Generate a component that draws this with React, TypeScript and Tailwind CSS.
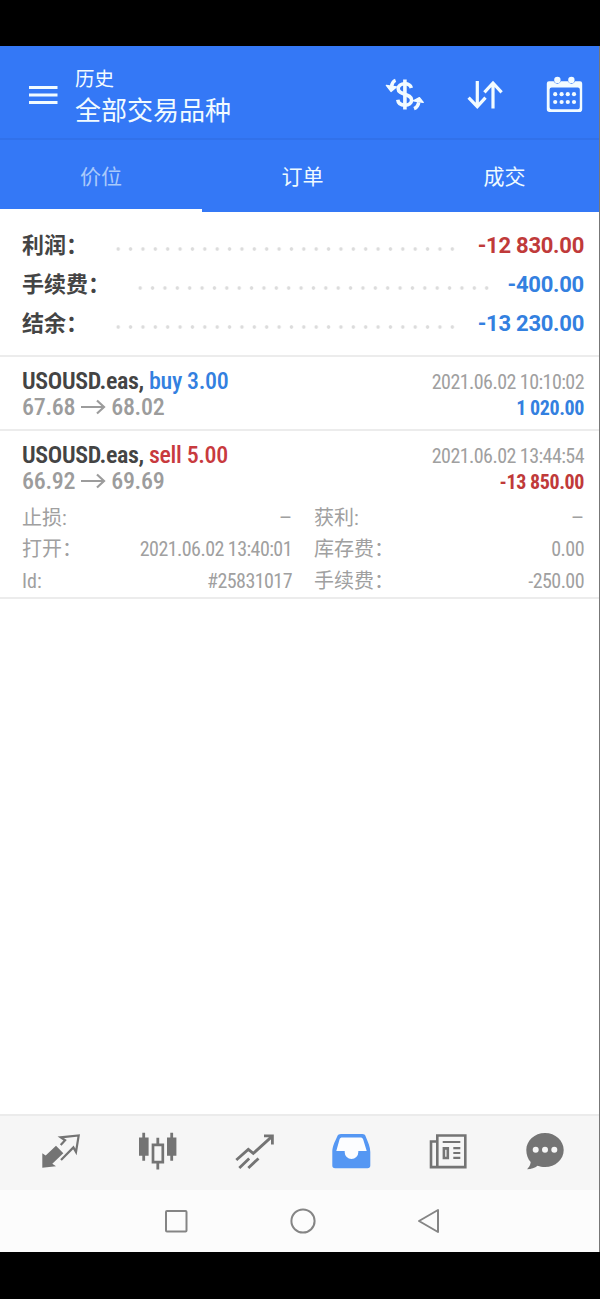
import type { ReactNode } from "react";

const summary = [
  { label: "利润：", value: "-12 830.00", color: "text-[#c03a3a]", dots: "w-[347px]" },
  { label: "手续费：", value: "-400.00", color: "text-[#3380e0]", dots: "w-[359px]" },
  { label: "结余：", value: "-13 230.00", color: "text-[#3380e0]", dots: "w-[347px]" },
];

const details = [
  { label: "止损:", value: "–", label2: "获利:", value2: "–" },
  { label: "打开：", value: "2021.06.02 13:40:01", label2: "库存费：", value2: "0.00" },
  { label: "Id:", value: "#25831017", label2: "手续费：", value2: "-250.00" },
];

const MenuIcon = () => (
  <svg width="30" height="20" viewBox="0 0 30 20" stroke="currentColor" strokeWidth="3">
    <path d="M1 2.4h28.5M1 9.9h28.5M1 17.6h28.5" />
  </svg>
);

const CurrencyIcon = () => (
  <svg width="40" height="34" viewBox="0 0 40 34" fill="none" stroke="currentColor">
    <path d="M26.3 10C25.5 7 23 5.8 19.8 5.8c-4 0-6.6 2-6.6 5 0 6.6 13.4 4.2 13.4 11.2 0 3.2-2.8 5.2-6.8 5.2-3.8 0-6.6-1.8-7-5.4" strokeWidth="3.6" />
    <path d="M19.9 1.5v30" strokeWidth="3.6" />
    <path d="M10.6 2.4C8.2 3.2 7 5.4 6.6 8.500" strokeWidth="3.600" />
    <path d="M1.400 7.400l10 1.600-5.400 4.400z" fill="currentColor" strokeWidth="1.400" strokeLinejoin="round" />
    <path d="M29 30.600c2.800-1 4.200-3 4.700-6.400" strokeWidth="3.600" />
    <path d="M28.400 22.800l6-3.200 3.800 4.800z" fill="currentColor" strokeWidth="1.400" strokeLinejoin="round" />
  </svg>
);

const SortIcon = () => (
  <svg width="36" height="30" viewBox="0 0 36 30" fill="none" stroke="currentColor" strokeWidth="3.2">
    <path d="M10.3 1v26M1.6 17.6l8.7 9 8.2-9" />
    <path d="M26 28.4V3M17.4 12.4L26 3l8.6 9.4" />
  </svg>
);

const CalendarIcon = () => (
  <svg width="38" height="38" viewBox="0 0 38 38">
    <path
      fill="currentColor"
      fillRule="evenodd"
      d="M3 5.2h4.6a4 4 0 0 0 7.4 0h6.8a4 4 0 0 0 7.4 0h4.8a2.2 2.2 0 0 1 2.2 2.2v25.8a2.8 2.8 0 0 1-2.8 2.8H3.6a2.8 2.8 0 0 1-2.8-2.8V7.4A2.2 2.2 0 0 1 3 5.2zM5.6 11.6a2 2 0 0 0-2 2v17.6a2 2 0 0 0 2 2h26.2a2 2 0 0 0 2-2V13.6a2 2 0 0 0-2-2z"
    />
    <g fill="currentColor">
      <circle cx="11.4" cy="3.9" r="3.2" />
      <circle cx="25.4" cy="3.9" r="3.2" />
      {[9.2, 15.6, 21.8, 28].map((x) => (
        <g key={x}>
          <circle cx={x} cy="18.2" r="2.1" />
          <circle cx={x} cy="26" r="2.1" />
        </g>
      ))}
    </g>
  </svg>
);

const NavIcon = ({ children, className = "text-[#747474]" }: { children: ReactNode; className?: string }) => (
  <div className="flex w-[97px] shrink-0 justify-center">
    <svg className={className} width="40" height="40" viewBox="0 0 40 40" fill="none" stroke="currentColor" strokeWidth="2.4">
      {children}
    </svg>
  </div>
);

const Deal = ({ side, sideColor, open, close, time, profit, profitColor }: Record<string, string>) => (
  <div className="flex justify-between font-['Roboto_Condensed','Noto_Sans_CJK_SC',sans-serif]">
    <div className="text-[24px] leading-[26px] font-medium">
      <div className="tracking-[-0.36px] text-[#444]">
        <span className="font-semibold">USOUSD.eas,</span> <span className={sideColor}>{side}</span>
      </div>
      <div className="flex items-center tracking-[-0.3px] text-[#9c9c9c]">
        <span>{open}</span>
        <svg className="mr-[5px] ml-[6px]" width="25" height="16" viewBox="0 0 25 16" fill="none" stroke="currentColor" strokeWidth="2.2">
          <path d="M0 8h23M16 1.5L23 8l-7 6.5" />
        </svg>
        <span>{close}</span>
      </div>
    </div>
    <div className="pt-[1px] text-right text-[20px] leading-[26px]">
      <div className="tracking-[-0.55px] text-[#a0a0a0]">{time}</div>
      <div className={`font-bold tracking-[-0.4px] ${profitColor}`}>{profit}</div>
    </div>
  </div>
);

const DetailValue = ({ value }: { value: string }) =>
  value === "–" ? (
    <span className="font-['Roboto']">{value}</span>
  ) : (
    <span className="tracking-[-0.55px]">{value}</span>
  );

const App = () => {
  return (
    <div className="flex h-[1299px] w-[600px] flex-col overflow-hidden bg-black pt-[46px] font-['Roboto','Noto_Sans_CJK_SC',sans-serif]">
      <div className="flex h-[1206px] shrink-0 flex-col border-r border-[#777] bg-white">
        <header className="flex h-[92px] shrink-0 items-start bg-[#3478f6] pl-[28px] text-[#f2fbff]">
          <div className="mt-[39px]"><MenuIcon /></div>
          <div className="ml-[17px] w-[310px] pt-[22px]">
            <div className="text-[19.5px] leading-[24px]">历史</div>
            <div className="text-[26px] leading-[38px]">全部交易品种</div>
          </div>
          <div className="mt-[32px]"><CurrencyIcon /></div>
          <div className="mt-[34px] ml-[42px]"><SortIcon /></div>
          <div className="mt-[30px] ml-[43px]"><CalendarIcon /></div>
        </header>

        <nav className="flex h-[74px] shrink-0 overflow-hidden border-t-2 border-[#3171ea] bg-[#3478f6] text-[21px] text-[#eefaff]">
          <div className="flex w-[202px] shrink-0 items-center justify-center border-b-[3px] border-white pt-[6px] text-[#a9c9fb]">价位</div>
          <div className="flex w-[202px] shrink-0 items-center justify-center pt-[3px] pr-[1px]">订单</div>
          <div className="flex w-[202px] shrink-0 items-center justify-center pt-[3px] pr-[1px]">成交</div>
        </nav>

        <section className="h-[145px] shrink-0 border-b-2 border-[#ececec] pt-[14px] pr-[15px] pl-[22px]">
          {summary.map((row) => (
            <div key={row.label} className="flex h-[39px] items-center text-[22px] font-bold">
              <span className="text-[#444]">{row.label}</span>
              <span className={`mt-[7px] ml-[24px] h-[6px] shrink-0 bg-[radial-gradient(circle,#dcdcdc_1.4px,transparent_2.1px)] bg-size-[12.38px_6px] ${row.dots}`} />
              <span className={`ml-auto tracking-[-0.25px] whitespace-nowrap ${row.color}`}>{row.value}</span>
            </div>
          ))}
        </section>

        <section className="h-[74px] shrink-0 border-b-2 border-[#ececec] pt-[11px] pr-[15px] pl-[22px]">
          <Deal side="buy 3.00" sideColor="text-[#3380e0]" open="67.68" close="68.02" time="2021.06.02 10:10:02" profit="1 020.00" profitColor="text-[#3380e0]" />
        </section>

        <section className="h-[168px] shrink-0 border-b-2 border-[#ececec] pt-[11px] pr-[15px] pl-[22px]">
          <Deal side="sell 5.00" sideColor="text-[#c83a3e]" open="66.92" close="69.69" time="2021.06.02 13:44:54" profit="-13 850.00" profitColor="text-[#c03a3a]" />
          <div className="mt-[8px] font-['Roboto_Condensed','Noto_Sans_CJK_SC',sans-serif] text-[20px] text-[#a0a0a0]">
            {details.map((row) => (
              <div key={row.label} className="grid h-[31.3px] grid-cols-2 items-center gap-[22px] leading-[31px]">
                <div className="flex justify-between">
                  <span>{row.label}</span>
                  <DetailValue value={row.value} />
                </div>
                <div className="flex justify-between">
                  <span>{row.label2}</span>
                  <DetailValue value={row.value2} />
                </div>
              </div>
            ))}
          </div>
        </section>

        <footer className="mt-auto shrink-0">
          <div className="flex h-[76px] items-center overflow-hidden border-t-2 border-[#ebebeb] bg-[#f6f6f6] pb-[2px] pl-[11.5px]">
            <NavIcon>
              <path d="M20.7 13l4.4-4.7-4.4-3 18-1.800L36 20l-2.600-4.600L21 28" strokeWidth="2.200" />
              <path d="M2.300 35.700V21.300l3.400 2.200L16 13.700l7.300 7.600-11 10.400 3.700 2.600z" fill="currentColor" stroke="none" />
            </NavIcon>
            <NavIcon>
              <path d="M6.700.8v28M34.700.8v28M20.800 5.800v7M20.800 31v6.400" strokeWidth="2.800" />
              <path d="M2 5.400h9.600v18.400H2zM30 5.400h9.400v18.400H30z" fill="currentColor" stroke="none" />
              <path d="M16 12.800h9.800v17.400H16z" strokeWidth="2.700" />
            </NavIcon>
            <NavIcon>
              <path d="M2.300 28l12-10.600 5 4L37.800 4.600M30 3.800h8.400v8.600M5.300 36l9.900-9.600M14.300 36l10.200-9.600" strokeWidth="2.800" />
            </NavIcon>
            <NavIcon className="text-[#5597f3]">
              <path
                fill="currentColor"
                stroke="none"
                d="M10 2h21.3c1.8 0 2.8.8 3.4 2.4 2.4 6 4.6 10 4.6 15.6v13.6c0 1.8-1 2.7-2.8 2.7H4.1c-1.8 0-2.8-.9-2.8-2.7V20c0-5.6 2.2-9.6 4.9-15.6C6.9 2.8 8.2 2 10 2z"
              />
              <path fill="#fcfdff" stroke="none" d="M11.5 5.4h17.6c1.7 0 2.5.5 3.1 2l3.5 11.6h-8.4v1.2a6.8 6.8 0 0 1-13.6 0V19H5.3L8.5 7.4c.5-1.5 1.3-2 3-2z" />
            </NavIcon>
            <NavIcon>
              <path d="M9.3 3.5h28v31.600h-28zM8.500 9.500H3v25.600h6.300" strokeWidth="2.600" />
              <path d="M14.700 10h17.600M25.300 16.100h7M25.300 21h7M25.300 25.800h7" strokeWidth="2.200" />
              <path d="M15.900 16.400h3.900v9.600h-3.900z" strokeWidth="2.600" />
            </NavIcon>
            <NavIcon>
              <path fill="currentColor" stroke="none" d="M20 .9c10.400 0 18.700 7.600 18.700 17S30.400 35 20 35c-2.700 0-5.200-.4-7.400-1.300-2.700 2.300-6.400 3.500-10.500 3.500 2-1.900 3.400-4.200 3.600-7.100C3 27 1.300 22.700 1.300 17.900 1.300 8.500 9.600.9 20 .9z" />
              <g fill="#f6f6f6" stroke="none">
                <circle cx="10.7" cy="17.7" r="3" />
                <circle cx="20" cy="17.7" r="3" />
                <circle cx="29.3" cy="17.7" r="3" />
              </g>
            </NavIcon>
          </div>
          <div className="flex h-[62px] items-center bg-[#fcfcfc] pl-[164px] text-[#858585]">
            <svg width="24" height="24" viewBox="0 0 24 24" fill="none" stroke="currentColor" strokeWidth="2">
              <rect x="2" y="2" width="20.5" height="20.5" rx="1" />
            </svg>
            <svg className="ml-[102px]" width="26" height="26" viewBox="0 0 26 26" fill="none" stroke="currentColor" strokeWidth="2">
              <circle cx="13" cy="13" r="11.6" />
            </svg>
            <svg className="ml-[100px]" width="26" height="26" viewBox="0 0 26 26" fill="none" stroke="currentColor" strokeWidth="2" strokeLinejoin="round">
              <path d="M3 13L22 2v22z" />
            </svg>
          </div>
        </footer>
      </div>
    </div>
  );
};

export default App;
